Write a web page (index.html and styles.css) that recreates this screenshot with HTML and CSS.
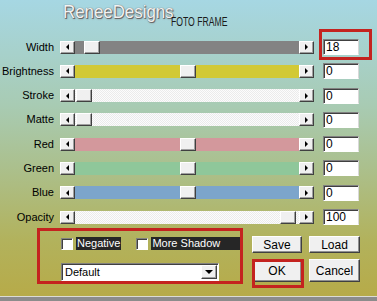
FILE: index.html
```html
<!DOCTYPE html>
<html lang="en">
<head>
  <meta charset="UTF-8">
  <title>Foto Frame</title>
  <link rel="stylesheet" href="styles.css">
</head>
<body>

  <div class="dialog">
    <header class="title-bar">
      <span class="brand">ReneeDesigns</span>
      <span class="subtitle">FOTO FRAME</span>
    </header>

    <div class="sliders">
      <div class="row">
        <label class="row-label">Width</label>
        <div class="scroll">
          <span class="arrow left"></span>
          <div class="track track-grey"><span class="thumb" style="left: 9px"></span></div>
          <span class="arrow right"></span>
        </div>
        <div class="value-wrap marked"><input class="value" type="text" value="18"></div>
      </div>

      <div class="row">
        <label class="row-label">Brightness</label>
        <div class="scroll">
          <span class="arrow left"></span>
          <div class="track track-yellow"><span class="thumb" style="left: 105px"></span></div>
          <span class="arrow right"></span>
        </div>
        <div class="value-wrap"><input class="value" type="text" value="0"></div>
      </div>

      <div class="row">
        <label class="row-label">Stroke</label>
        <div class="scroll">
          <span class="arrow left"></span>
          <div class="track track-light"><span class="thumb" style="left: 1px"></span></div>
          <span class="arrow right"></span>
        </div>
        <div class="value-wrap"><input class="value" type="text" value="0"></div>
      </div>

      <div class="row">
        <label class="row-label">Matte</label>
        <div class="scroll">
          <span class="arrow left"></span>
          <div class="track track-light"><span class="thumb" style="left: 1px"></span></div>
          <span class="arrow right"></span>
        </div>
        <div class="value-wrap"><input class="value" type="text" value="0"></div>
      </div>

      <div class="row">
        <label class="row-label">Red</label>
        <div class="scroll">
          <span class="arrow left"></span>
          <div class="track track-red"><span class="thumb" style="left: 105px"></span></div>
          <span class="arrow right"></span>
        </div>
        <div class="value-wrap"><input class="value" type="text" value="0"></div>
      </div>

      <div class="row">
        <label class="row-label">Green</label>
        <div class="scroll">
          <span class="arrow left"></span>
          <div class="track track-green"><span class="thumb" style="left: 105px"></span></div>
          <span class="arrow right"></span>
        </div>
        <div class="value-wrap"><input class="value" type="text" value="0"></div>
      </div>

      <div class="row">
        <label class="row-label">Blue</label>
        <div class="scroll">
          <span class="arrow left"></span>
          <div class="track track-blue"><span class="thumb" style="left: 105px"></span></div>
          <span class="arrow right"></span>
        </div>
        <div class="value-wrap"><input class="value" type="text" value="0"></div>
      </div>

      <div class="row">
        <label class="row-label">Opacity</label>
        <div class="scroll">
          <span class="arrow left"></span>
          <div class="track track-light"><span class="thumb" style="left: 205px"></span></div>
          <span class="arrow right"></span>
        </div>
        <div class="value-wrap"><input class="value" type="text" value="100"></div>
      </div>
    </div>

    <div class="bottom">
      <div class="options">
        <div class="checks">
          <label class="check"><span class="box"></span><span class="check-label">Negative</span></label>
          <label class="check grow"><span class="box"></span><span class="check-label">More Shadow</span></label>
        </div>
        <div class="select">
          <span>Default</span>
          <span class="select-arrow"></span>
        </div>
      </div>

      <div class="actions">
        <button class="btn">Save</button>
        <button class="btn">Load</button>
        <button class="btn btn-default">OK</button>
        <button class="btn">Cancel</button>
      </div>
    </div>
  </div>
  <div class="frame-edge"></div>

</body>
</html>
```

FILE: styles.css
```css
* {
  box-sizing: border-box;
  margin: 0;
  padding: 0;
}

body {
  width: 377px;
  height: 301px;
  overflow: hidden;
  font-family: "Liberation Sans", Arial, sans-serif;
  font-size: 11px;
  color: #000;
  background: linear-gradient(180deg, #a6d7e3 0%, #a8cbb3 35%, #abc08e 55%, #b2b25c 80%, #b7aa47 100%);
}

.dialog {
  height: 296px;
  display: flex;
  flex-direction: column;
}

.frame-edge {
  height: 5px;
  border-top: 1px solid #dcdcd4;
  background: #8c8c8c;
}

/* header */
.title-bar {
  height: 39px;
  padding-left: 63px;
  display: flex;
  align-items: flex-start;
}

.brand {
  display: inline-block;
  font-size: 19px;
  line-height: 20px;
  margin-top: 2px;
  color: #f2f2f2;
  text-shadow: 1px 1px 0 #6a6a6a, 0 0 1px #5a5a5a, 1px 1px 2px #888;
  transform: scaleX(0.887);
  transform-origin: left center;
}

.subtitle {
  display: inline-block;
  font-size: 12px;
  line-height: 12px;
  margin-top: 16px;
  margin-left: -17px;
  color: #1a1a1a;
  transform: scaleX(0.72);
  transform-origin: left center;
}

/* slider rows */
.sliders {
  display: flex;
  flex-direction: column;
  gap: 8.3px;
}

.row {
  display: flex;
  align-items: center;
  height: 16px;
}

.row-label {
  width: 54px;
  margin-right: 6px;
  text-align: right;
  line-height: 13px;
}

.scroll {
  display: flex;
  width: 254px;
  height: 13px;
}

.arrow,
.thumb,
.select-arrow {
  background: #f0f0f0;
  border: 1px solid;
  border-color: #fff #404040 #404040 #fff;
  box-shadow: inset -1px -1px #a0a0a0;
}

.arrow {
  width: 15px;
  flex: none;
  display: flex;
  align-items: center;
  justify-content: center;
}

.arrow::before {
  content: "";
  border-style: solid;
  border-color: transparent;
}

.arrow.left::before {
  border-width: 3px 3px 3px 0;
  border-right-color: #000;
}

.arrow.right::before {
  border-width: 3px 0 3px 3px;
  border-left-color: #000;
}

.track {
  flex: 1;
  position: relative;
}

.thumb {
  position: absolute;
  top: 0;
  width: 16px;
  height: 13px;
}

.track-grey { background: #838383; }
.track-yellow { background: #d2c935; }
.track-red { background: #d3989c; }
.track-green { background: #8fc79a; }
.track-blue { background: #7ca5cb; }
.track-light {
  background: repeating-conic-gradient(#fcfcfc 0 25%, #ebebeb 0 50%) 0 0 / 2px 2px;
}

.value-wrap {
  position: relative;
  display: flex;
  margin-left: 9px;
}

.value {
  width: 36px;
  height: 16px;
  padding-left: 2px;
  background: #fff;
  border: 1px solid;
  border-color: #808080 #d8d8d8 #fff #808080;
  box-shadow: inset 1px 1px #404040;
  font-family: "Liberation Sans", Arial, sans-serif;
  font-size: 12px;
  color: #000;
  outline: none;
}

.value-wrap.marked::after {
  content: "";
  position: absolute;
  left: -4px;
  top: -10px;
  right: -13px;
  bottom: -5px;
  border: 3px solid #c4231f;
}

/* bottom part */
.bottom {
  display: flex;
  margin-top: 3px;
}

.options {
  width: 206px;
  height: 56px;
  margin-left: 37px;
  padding: 6px 0 0 21px;
  border: 3px solid #c4231f;
  display: flex;
  flex-direction: column;
  justify-content: space-between;
}

.checks {
  display: flex;
  align-items: center;
  height: 13px;
}

.check {
  display: flex;
  align-items: center;
}

.check + .check {
  margin-left: 15px;
}

.check.grow {
  flex: 1;
}

.check.grow .check-label {
  flex: 1;
}

.box {
  width: 12px;
  height: 12px;
  margin-right: 3px;
  background: #fff;
  border: 1px solid;
  border-color: #808080 #fff #fff #808080;
  box-shadow: inset 1px 1px #404040;
}

.check-label {
  background: #262626;
  color: #fff;
  line-height: 13px;
  padding: 0 1px;
}

.select {
  width: 158px;
  height: 18px;
  padding-left: 3px;
  background: #fff;
  border: 1px solid;
  border-color: #808080 #fff #fff #808080;
  box-shadow: inset 1px 1px #404040;
  display: flex;
  align-items: center;
  justify-content: space-between;
}

.select-arrow {
  width: 16px;
  height: 14px;
  margin-right: 1px;
  display: flex;
  align-items: center;
  justify-content: center;
}

.select-arrow::before {
  content: "";
  border-style: solid;
  border-width: 4px 4px 0 4px;
  border-color: #000 transparent transparent transparent;
}

.actions {
  display: grid;
  grid-template-columns: 50px 51px;
  grid-template-rows: 17px 23px;
  column-gap: 7px;
  row-gap: 6px;
  margin: 8px 0 0 9px;
}

.btn {
  background: #f0f0f0;
  border: 1px solid;
  border-color: #fff #404040 #404040 #fff;
  box-shadow: inset -1px -1px #909090;
  font-family: "Liberation Sans", Arial, sans-serif;
  font-size: 12px;
  color: #000;
}

.btn-default {
  position: relative;
}

.btn-default::after {
  content: "";
  position: absolute;
  left: -1px;
  top: -1px;
  width: 46px;
  height: 23px;
  border: 3px solid #c4231f;
}
```
